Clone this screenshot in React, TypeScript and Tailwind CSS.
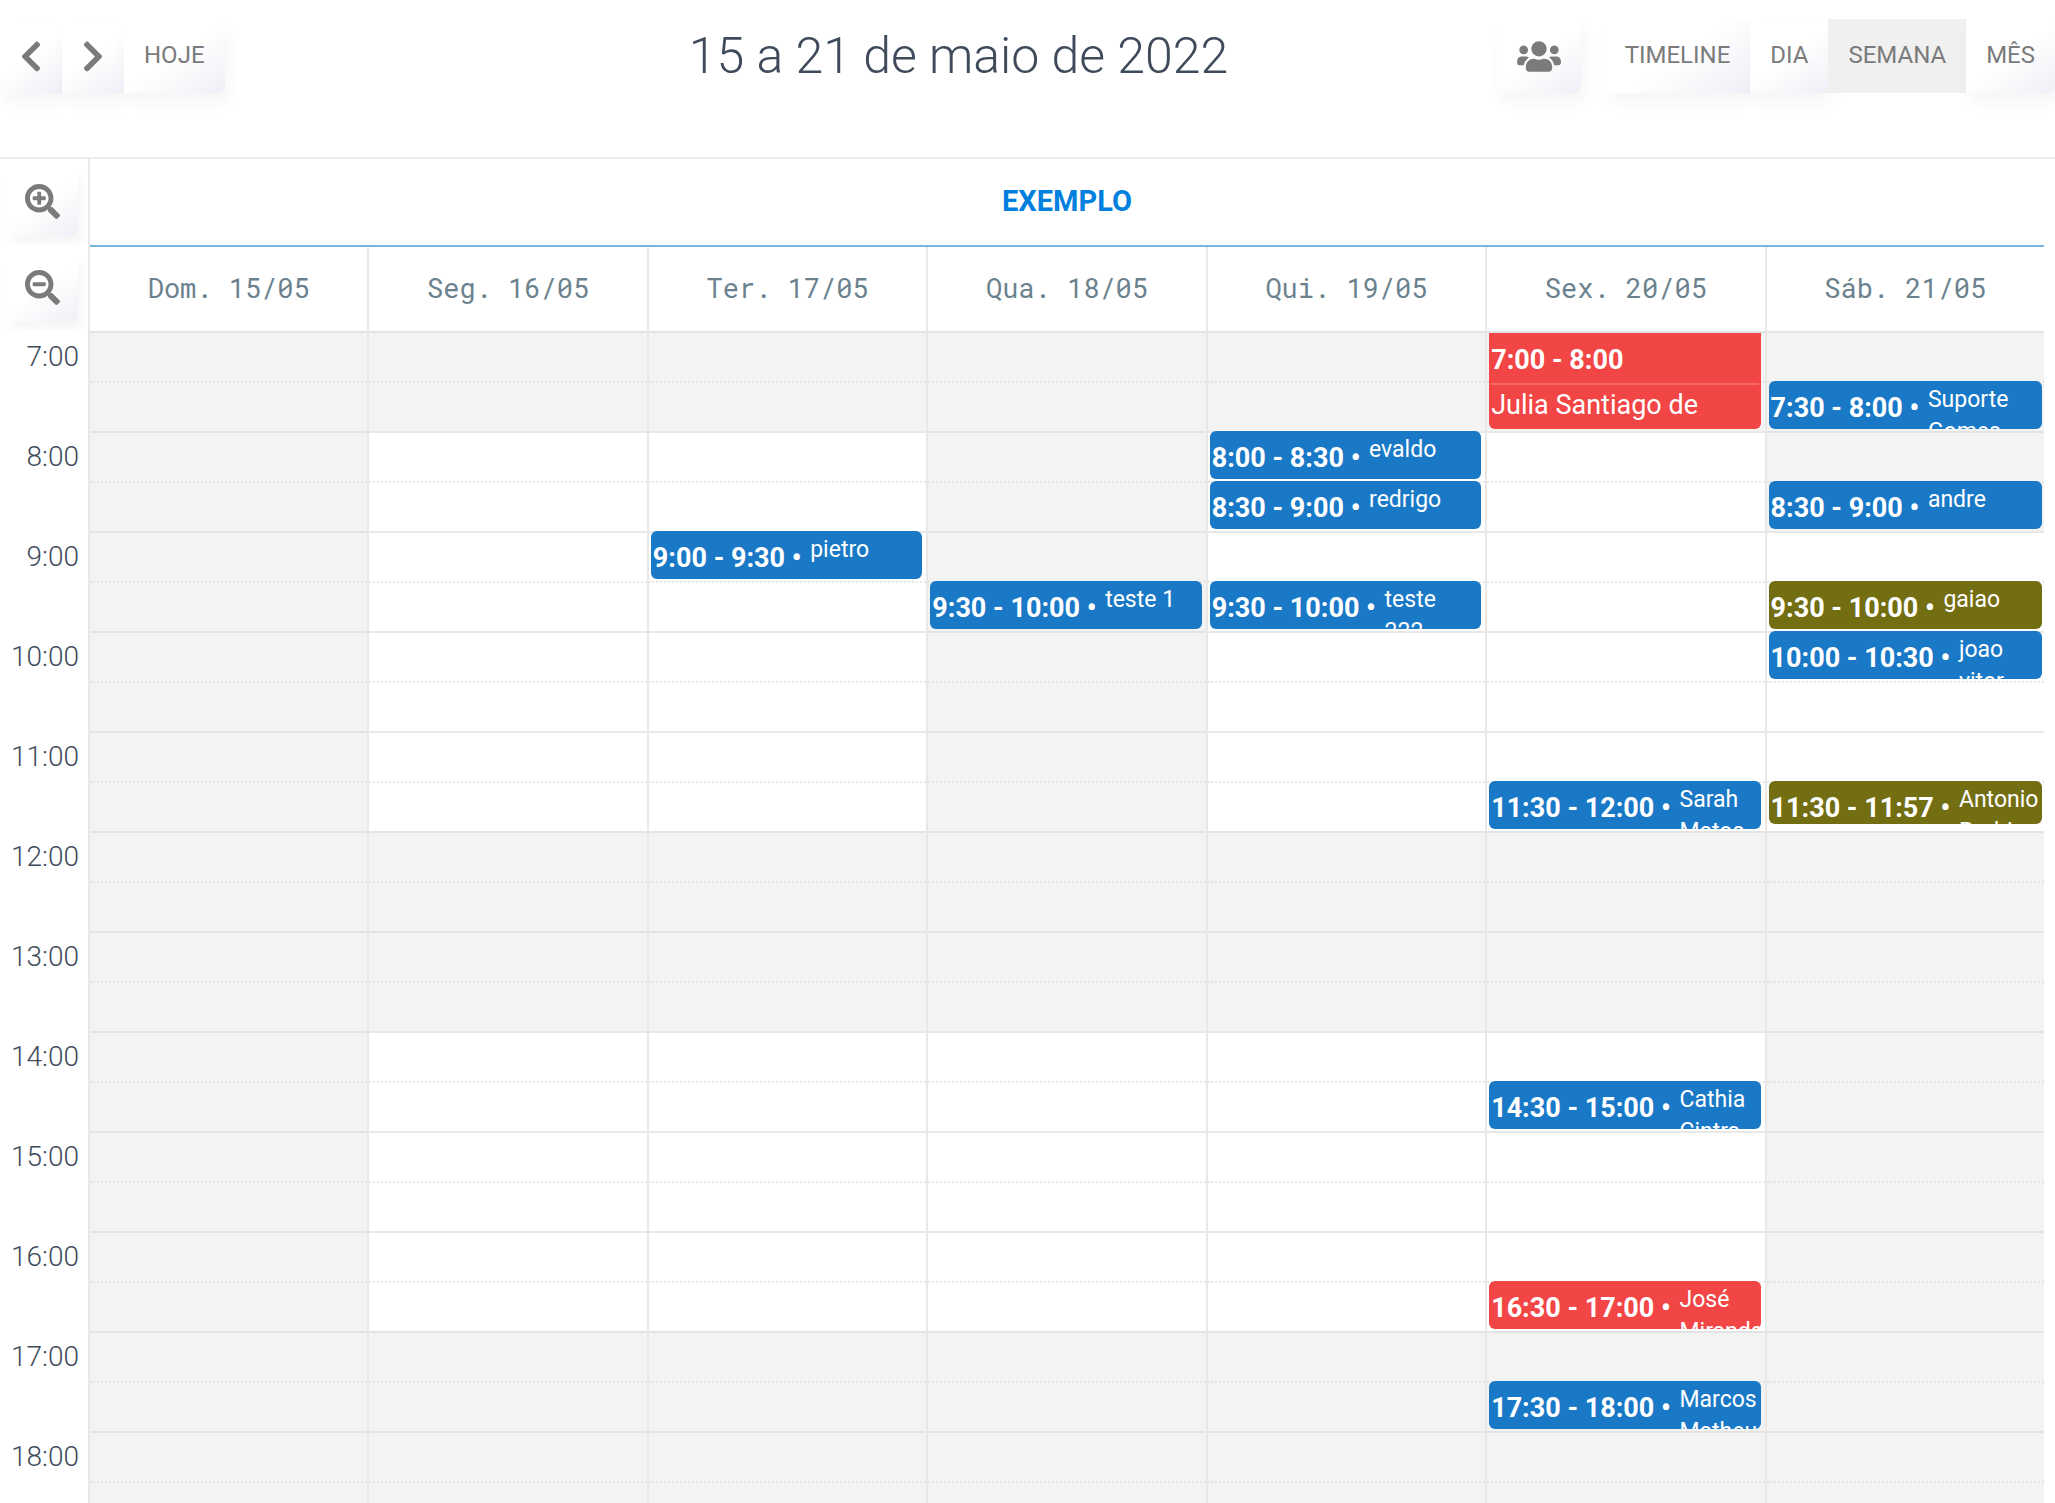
import type { ReactNode } from 'react'
import { FaChevronLeft, FaChevronRight, FaSearchMinus, FaSearchPlus, FaUsers } from 'react-icons/fa'
import clsx from 'clsx'

type EventColor = 'blue' | 'red' | 'olive'

interface CalendarEvent {
  start: string
  end: string
  title: string
  color: EventColor
}

interface Day {
  label: string
  closed: [number, number][]
  events: CalendarEvent[]
}

const FIRST_HOUR = 7
const LAST_HOUR = 19
const HOUR_HEIGHT = 100
const LINE_HEIGHT = 2

const HOURS = Array.from({ length: LAST_HOUR - FIRST_HOUR }, (_, i) => FIRST_HOUR + i)

const WEEKDAY_CLOSED: [number, number][] = [
  [7, 8],
  [12, 14],
  [17, 19],
]

const DAYS: Day[] = [
  { label: 'Dom. 15/05', closed: [[7, 19]], events: [] },
  { label: 'Seg. 16/05', closed: WEEKDAY_CLOSED, events: [] },
  {
    label: 'Ter. 17/05',
    closed: WEEKDAY_CLOSED,
    events: [{ start: '9:00', end: '9:30', title: 'pietro', color: 'blue' }],
  },
  {
    label: 'Qua. 18/05',
    closed: [
      [7, 14],
      [17, 19],
    ],
    events: [{ start: '9:30', end: '10:00', title: 'teste 1', color: 'blue' }],
  },
  {
    label: 'Qui. 19/05',
    closed: WEEKDAY_CLOSED,
    events: [
      { start: '8:00', end: '8:30', title: 'evaldo', color: 'blue' },
      { start: '8:30', end: '9:00', title: 'redrigo', color: 'blue' },
      { start: '9:30', end: '10:00', title: 'teste 222', color: 'blue' },
    ],
  },
  {
    label: 'Sex. 20/05',
    closed: WEEKDAY_CLOSED,
    events: [
      { start: '7:00', end: '8:00', title: 'Julia Santiago de', color: 'red' },
      { start: '11:30', end: '12:00', title: 'Sarah Matos', color: 'blue' },
      { start: '14:30', end: '15:00', title: 'Cathia Cintra', color: 'blue' },
      { start: '16:30', end: '17:00', title: 'José Miranda', color: 'red' },
      { start: '17:30', end: '18:00', title: 'Marcos Matheus', color: 'blue' },
    ],
  },
  {
    label: 'Sáb. 21/05',
    closed: [
      [7, 9],
      [12, 19],
    ],
    events: [
      { start: '7:30', end: '8:00', title: 'Suporte Gomes', color: 'blue' },
      { start: '8:30', end: '9:00', title: 'andre', color: 'blue' },
      { start: '9:30', end: '10:00', title: 'gaiao', color: 'olive' },
      { start: '10:00', end: '10:30', title: 'joao vitor', color: 'blue' },
      { start: '11:30', end: '11:57', title: 'Antonio Rodrigues', color: 'olive' },
    ],
  },
]

const EVENT_COLORS: Record<EventColor, string> = {
  blue: 'bg-[#1a79c7]',
  red: 'bg-[#f24545]',
  olive: 'bg-[#736e12]',
}

function toHours(time: string) {
  const [h, m] = time.split(':').map(Number)
  return h + m / 60
}

interface ToolbarButtonProps {
  children: ReactNode
  label?: string
  active?: boolean
  className?: string
}

function ToolbarButton({ children, label, active = false, className }: ToolbarButtonProps) {
  return (
    <button
      type="button"
      aria-label={label}
      aria-pressed={active}
      className={clsx(
        'flex h-[74px] items-center px-5 text-[24px] leading-8 text-[#7b7b7b]',
        !label && 'pb-[2px]',
        active
          ? 'bg-[#f0f0f0]'
          : 'bg-linear-[145deg,#ffffff_50%,#f0eff6] shadow-[4px_10px_16px_rgba(0,0,0,0.04)]',
        className
      )}
    >
      {children}
    </button>
  )
}

function ZoomButton({ children, label }: { children: ReactNode; label: string }) {
  return (
    <div className="flex h-[86px] items-center justify-end overflow-hidden pr-[10px]">
      <button
        type="button"
        aria-label={label}
        className="flex h-[67px] items-center rounded-md bg-linear-[145deg,#ffffff_50%,#f0eff6] px-[18px] pb-[2px] text-[#7b7b7b] shadow-[4px_8px_12px_rgba(0,0,0,0.04)]"
      >
        {children}
      </button>
    </div>
  )
}

function EventCard({ event }: { event: CalendarEvent }) {
  const start = toHours(event.start)
  const end = toHours(event.end)
  const isShort = end - start < 1
  // keep the first line of the grid visible above an event that starts on it
  const top = Math.max(LINE_HEIGHT, Math.round((start - FIRST_HOUR) * HOUR_HEIGHT))
  const bottom = Math.round((end - FIRST_HOUR) * HOUR_HEIGHT) - 2

  return (
    <div
      className={clsx(
        'absolute left-[2px] right-1 overflow-hidden px-[2px] text-white group-last:right-[2px]',
        isShort ? 'flex rounded-md' : 'rounded-b-md',
        EVENT_COLORS[event.color]
      )}
      style={{ top, height: bottom - top }}
    >
      {isShort ? (
        <>
          <span className="shrink-0 whitespace-pre text-[27px] leading-[54px] font-bold">
            {`${event.start} - ${event.end} • `}
          </span>
          <span className="min-w-0 flex-1 pt-[3px] pl-[2px] text-[23px] leading-8">{event.title}</span>
        </>
      ) : (
        <>
          <div className="border-b-2 border-white/20 pt-1 text-[27px] leading-[46px] font-bold">
            {event.start} - {event.end}
          </div>
          <div className="text-[27px] leading-10">{event.title}</div>
        </>
      )}
    </div>
  )
}

function DayColumn({ day }: { day: Day }) {
  return (
    <div className="group relative border-l-2 border-[#e8e8e8]">
      {HOURS.map((hour) => (
        <div key={hour}>
          <div className="h-[50px] border-t-2 border-[#e8e8e8]" />
          <div className="h-[50px] border-t-2 border-dotted border-[#e8e8e8]" />
        </div>
      ))}
      {day.closed.map(([from, to]) => (
        <div
          key={from}
          className="absolute inset-x-0 bg-[#d7d7d7]/30"
          style={{ top: (from - FIRST_HOUR) * HOUR_HEIGHT, height: (to - from) * HOUR_HEIGHT }}
        />
      ))}
      {day.events.map((event) => (
        <EventCard key={event.start} event={event} />
      ))}
    </div>
  )
}

export default function App() {
  return (
    <div className="flex h-screen flex-col overflow-hidden bg-white font-['Roboto',sans-serif] text-[#3f4b5b]">
      <header className="flex items-center border-b-2 border-[#eeeeee] pt-[19px] pb-16">
        <div className="flex">
          <ToolbarButton label="Anterior">
            <FaChevronLeft className="h-[35px] w-[22px]" />
          </ToolbarButton>
          <ToolbarButton label="Próximo">
            <FaChevronRight className="h-[35px] w-[22px]" />
          </ToolbarButton>
          <ToolbarButton className="rounded-r-md">HOJE</ToolbarButton>
        </div>
        <h2 className="flex-1 pl-[196px] text-center text-[50px] leading-[74px] font-light">
          15 a 21 de maio de 2022
        </h2>
        <div className="flex gap-6">
          <ToolbarButton label="Profissionais" className="rounded-md">
            <FaUsers className="h-[35px] w-11" />
          </ToolbarButton>
          <div className="flex">
            <ToolbarButton className="rounded-l-md">TIMELINE</ToolbarButton>
            <ToolbarButton>DIA</ToolbarButton>
            <ToolbarButton active>SEMANA</ToolbarButton>
            <ToolbarButton className="rounded-r-md">MÊS</ToolbarButton>
          </div>
        </div>
      </header>

      <div className="flex pr-[11px]">
        <div className="w-[88px] shrink-0">
          <ZoomButton label="Aumentar">
            <FaSearchPlus className="size-[35px]" />
          </ZoomButton>
          <ZoomButton label="Diminuir">
            <FaSearchMinus className="size-[35px]" />
          </ZoomButton>
        </div>
        <div className="flex-1">
          <div className="border-l-2 border-[#e8e8e8]">
            <div className="h-[88px] border-b-2 border-[#78b4dc] text-center text-[29px] leading-[84px] font-bold text-[#0080de]">
              EXEMPLO
            </div>
          </div>
          <div className="grid grid-cols-7">
            {DAYS.map((day) => (
              <div
                key={day.label}
                className="h-[84px] border-l-2 border-[#e8e8e8] text-center font-['Roboto_Mono','Liberation_Mono',monospace] text-[27px] leading-[82px] text-[#6b828e]"
              >
                {day.label}
              </div>
            ))}
          </div>
        </div>
      </div>

      <div className="flex min-h-0 flex-1 overflow-hidden pr-[11px]">
        <div className="w-[88px] shrink-0">
          {HOURS.map((hour) => (
            <div key={hour} className="h-[100px] pr-[9px] text-right text-[28px] leading-[52px] font-light">
              {hour}:00
            </div>
          ))}
        </div>
        <div className="grid flex-1 grid-cols-7 self-start">
          {DAYS.map((day) => (
            <DayColumn key={day.label} day={day} />
          ))}
        </div>
      </div>
    </div>
  )
}
